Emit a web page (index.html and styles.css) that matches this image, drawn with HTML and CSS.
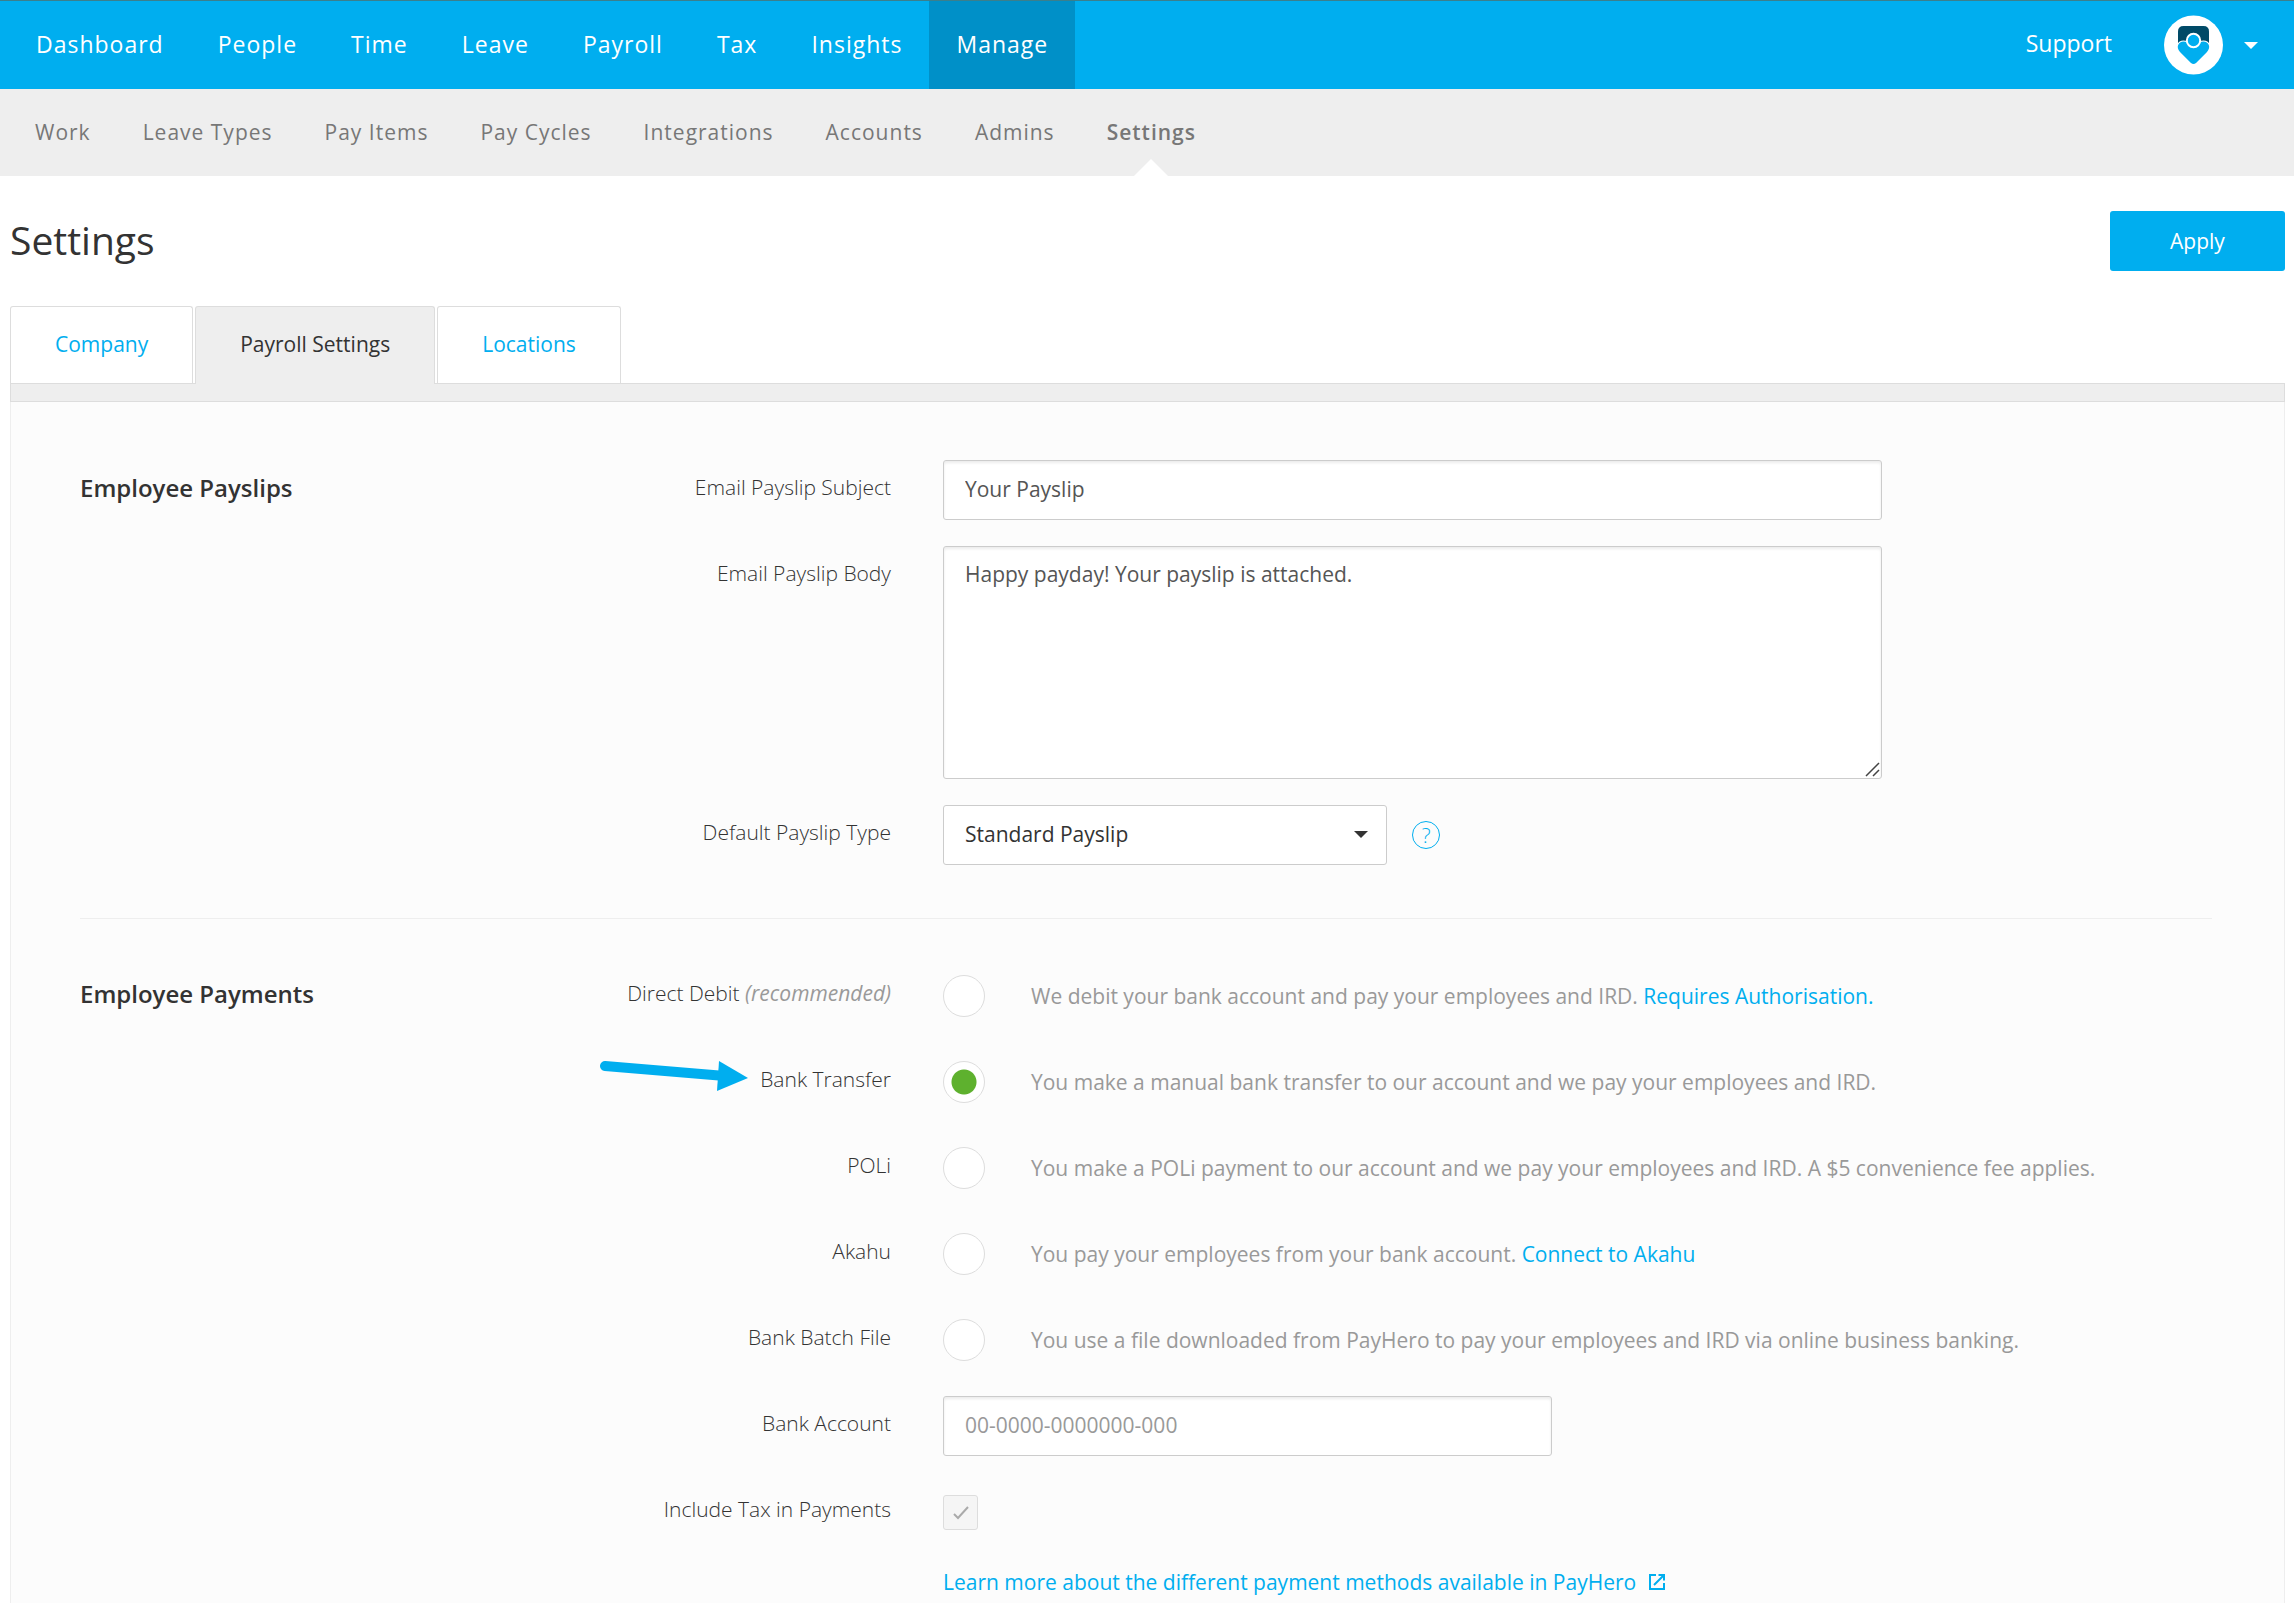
FILE: index.html
```html
<!DOCTYPE html>
<html lang="en">
<head>
<meta charset="utf-8">
<title>Settings</title>
<link rel="stylesheet" href="styles.css">
</head>
<body>
<header class="topbar">
  <nav class="topnav" aria-label="Main">
    <a href="#">Dashboard</a>
    <a href="#">People</a>
    <a href="#">Time</a>
    <a href="#">Leave</a>
    <a href="#">Payroll</a>
    <a href="#">Tax</a>
    <a href="#">Insights</a>
    <a href="#" class="active">Manage</a>
  </nav>
  <div class="account">
    <a href="#" class="support">Support</a>
    <button type="button" class="profile" aria-label="Account menu">
      <svg class="avatar" viewBox="0 0 60 60" width="60" height="60" aria-hidden="true">
        <circle cx="29.500" cy="30" r="29.500" fill="#fff"/>
        <path d="M14 28V16.500Q14 11 19.500 11h20Q45 11 45 16.500V28z" fill="#004a67"/>
        <path d="M27 48L16 37C11.500 32 14.500 26.500 19.500 26.500c3 0 4 1 5 2.500h10c1-1.500 2-2.500 5-2.500 5 0 8 5.500 3.500 10.500L32 48q-2.500 2-5 0z" fill="#00aeef" stroke="#fff" stroke-width="2" paint-order="stroke"/>
        <circle cx="29.500" cy="25.500" r="6.700" fill="#00aeef" stroke="#fff" stroke-width="2"/>
      </svg>
      <svg class="caret" viewBox="0 0 14 7" width="14" height="7" aria-hidden="true"><path d="M0 0h14L7 7z" fill="currentColor"/></svg>
    </button>
  </div>
</header>
<nav class="subnav" aria-label="Manage">
  <a href="#">Work</a>
  <a href="#">Leave Types</a>
  <a href="#">Pay Items</a>
  <a href="#">Pay Cycles</a>
  <a href="#">Integrations</a>
  <a href="#">Accounts</a>
  <a href="#">Admins</a>
  <a href="#" class="active">Settings</a>
</nav>
<main class="page">
  <div class="page-head">
    <h1>Settings</h1>
    <button type="button" class="apply">Apply</button>
  </div>
  <nav class="tabs" aria-label="Settings sections">
    <a href="#">Company</a>
    <a href="#" class="active">Payroll Settings</a>
    <a href="#">Locations</a>
  </nav>
  <div class="tab-bar"></div>
  <form class="panel">
    <section class="section">
      <h2>Employee Payslips</h2>
      <div class="rows">
        <div class="row">
          <label class="label" for="subject">Email Payslip Subject</label>
          <div class="control"><input class="field wide" id="subject" type="text" value="Your Payslip"></div>
        </div>
        <div class="row">
          <label class="label" for="body">Email Payslip Body</label>
          <div class="control">
            <div class="textarea-wrap wide">
              <textarea class="field" id="body">Happy payday! Your payslip is attached.</textarea>
              <svg class="grip" viewBox="0 0 15 15" width="15" height="15" aria-hidden="true"><path d="M1 14L14 1M8 14l6-6" stroke="#444" stroke-width="1.500" fill="none"/></svg>
            </div>
          </div>
        </div>
        <div class="row">
          <label class="label" for="type">Default Payslip Type</label>
          <div class="control">
            <div class="select-wrap">
              <select class="field" id="type"><option>Standard Payslip</option></select>
              <svg class="caret" viewBox="0 0 14 7" width="14" height="7" aria-hidden="true"><path d="M0 0h14L7 7z" fill="currentColor"/></svg>
            </div>
            <button type="button" class="help" aria-label="Help">?</button>
          </div>
        </div>
      </div>
    </section>
    <section class="section">
      <h2>Employee Payments</h2>
      <div class="rows payments">
        <div class="row">
          <label class="label" for="debit">Direct Debit <em>(recommended)</em></label>
          <div class="control"><input type="radio" name="method" id="debit"><p>We debit your bank account and pay your employees and IRD. <a href="#">Requires Authorisation.</a></p></div>
        </div>
        <div class="row">
          <label class="label" for="transfer">Bank Transfer
            <svg class="pointer" viewBox="0 0 148 32" width="148" height="32" aria-hidden="true"><path d="M5 6L119 15.500" stroke="#00aeef" stroke-width="10" stroke-linecap="round"/><path d="M119 1l29 17-31 13z" fill="#00aeef"/></svg>
          </label>
          <div class="control"><input type="radio" name="method" id="transfer" checked><p>You make a manual bank transfer to our account and we pay your employees and IRD.</p></div>
        </div>
        <div class="row">
          <label class="label" for="poli">POLi</label>
          <div class="control"><input type="radio" name="method" id="poli"><p>You make a POLi payment to our account and we pay your employees and IRD. A $5 convenience fee applies.</p></div>
        </div>
        <div class="row">
          <label class="label" for="akahu">Akahu</label>
          <div class="control"><input type="radio" name="method" id="akahu"><p>You pay your employees from your bank account. <a href="#">Connect to Akahu</a></p></div>
        </div>
        <div class="row">
          <label class="label" for="batch">Bank Batch File</label>
          <div class="control"><input type="radio" name="method" id="batch"><p>You use a file downloaded from PayHero to pay your employees and IRD via online business banking.</p></div>
        </div>
        <div class="row">
          <label class="label" for="account">Bank Account</label>
          <div class="control"><input class="field medium" id="account" type="text" placeholder="00-0000-0000000-000"></div>
        </div>
        <div class="row">
          <label class="label" for="tax">Include Tax in Payments</label>
          <div class="control">
            <span class="check"><input type="checkbox" id="tax" checked disabled>
            <svg viewBox="0 0 16 14" width="16" height="14" aria-hidden="true"><path d="M1 8l4 4L15 1" stroke="#aaa" stroke-width="2" fill="none"/></svg></span>
          </div>
        </div>
        <a href="#" class="learn">Learn more about the different payment methods available in PayHero
          <svg viewBox="0 0 18 18" width="18" height="18" aria-hidden="true"><path d="M8 2H2v14h14v-6M10.500 2H16v5.500M16 2L6 12" stroke="currentColor" stroke-width="2" fill="none"/></svg>
        </a>
      </div>
    </section>
  </form>
</main>
</body>
</html>
```
FILE: styles.css
```css
* { box-sizing: border-box; }

body {
  margin: 0;
  min-height: 100vh;
  display: flex;
  flex-direction: column;
  font: 21px/28px "Open Sans", sans-serif;
  color: #333;
  background: #fff;
}

a { color: #00aeef; text-decoration: none; }
button, input, select, textarea { font: inherit; color: inherit; }
h1, h2, p { margin: 0; }
svg { display: block; }

.topbar {
  display: flex;
  justify-content: space-between;
  height: 89px;
  padding: 0 36px 0 9px;
  border-top: 1px solid #3b7f8c;
  background: #00aeef;
}
.topnav, .subnav { display: flex; }
.topnav a {
  display: flex;
  align-items: center;
  padding: 0 27px 2px;
  color: #fff;
  font-size: 23px;
  font-weight: 500;
  letter-spacing: 1px;
}
.topnav .active { background: #0090c8; }
.account { display: flex; align-items: center; gap: 52px; }
.support { padding-bottom: 4px; color: #fff; font-size: 23px; }
.profile {
  display: flex;
  align-items: center;
  gap: 20px;
  padding: 0;
  border: 0;
  background: none;
  color: #fff;
}

.subnav { height: 87px; padding: 0 9px; background: #eee; }
.subnav a {
  display: flex;
  align-items: center;
  position: relative;
  padding: 0 26px 2px;
  color: #777;
  letter-spacing: 1px;
}
.subnav .active { font-weight: 600; }
.subnav .active::after {
  content: "";
  position: absolute;
  left: 50%;
  bottom: 0;
  margin-left: -17px;
  border: 17px solid transparent;
  border-top-width: 0;
  border-bottom-color: #fff;
}

.page {
  flex: 1;
  display: flex;
  flex-direction: column;
  padding: 35px 9px 0 10px;
}
.page-head {
  display: flex;
  justify-content: space-between;
  margin-bottom: 35px;
}
h1 { font-size: 39px; line-height: 58px; font-weight: 400; }
.apply {
  width: 175px;
  height: 60px;
  border: 0;
  border-radius: 3px;
  background: #00aeef;
  color: #fff;
}

.tabs { display: flex; gap: 2px; }
.tabs a {
  height: 77px;
  padding: 23px 44px;
  border: 1px solid #ddd;
  border-bottom: 0;
  border-radius: 3px 3px 0 0;
}
.tabs .active {
  position: relative;
  height: 78px;
  margin-bottom: -1px;
  background: #eee;
  color: #333;
}
.tab-bar { height: 19px; border: 1px solid #ddd; background: #eee; }

.panel {
  flex: 1;
  padding: 0 72px 0 69px;
  border: 1px solid #eee;
  border-width: 0 1px;
  background: #fcfcfc;
}
.section { display: grid; grid-template-columns: 25% 1fr; padding-top: 58px; }
.section + .section { margin-top: 53px; padding-top: 47px; border-top: 1px solid #eee; }
h2 { padding-top: 14px; font-size: 24px; line-height: 28px; font-weight: 600; }
.rows { display: flex; flex-direction: column; gap: 26px; }
.row { display: flex; gap: 52px; }
.payments .row { min-height: 60px; }
.label {
  flex: none;
  position: relative;
  width: 278px;
  padding-top: 13px;
  font-weight: 300;
  text-align: right;
  white-space: nowrap;
}
.label em { color: #999; font-weight: 400; }
.control { flex: 1; display: flex; align-items: center; }

.field {
  height: 60px;
  padding: 0 21px 2px;
  border: 1px solid #ccc;
  border-radius: 3px;
  background: #fff;
  color: #555;
  box-shadow: inset 0 2px 3px rgba(0, 0, 0, .08);
}
.field::placeholder { color: #999; opacity: 1; }
.wide { width: 74%; }
.medium { width: 48%; }
.textarea-wrap { position: relative; }
.textarea-wrap .field {
  display: block;
  width: 100%;
  height: 233px;
  padding: 13px 21px;
  resize: none;
}
.grip { position: absolute; right: 2px; bottom: 2px; }
.select-wrap { position: relative; width: 35%; }
.select-wrap .field {
  width: 100%;
  appearance: none;
  box-shadow: none;
  color: #333;
}
.select-wrap .caret { position: absolute; right: 19px; top: 26px; pointer-events: none; }
.help {
  width: 28px;
  height: 28px;
  margin-left: 25px;
  padding: 0;
  border: 1px solid #00aeef;
  border-radius: 50%;
  background: none;
  color: #00aeef;
  font-size: 21px;
  font-weight: 300;
  line-height: 24px;
}

input[type="radio"] {
  appearance: none;
  flex: none;
  width: 42px;
  height: 42px;
  margin: 0 46px 0 0;
  border: 1px solid #ddd;
  border-radius: 50%;
  background: #fff;
}
input[type="radio"]:checked { background: radial-gradient(circle, #5eb12e 12px, #fff 13px); }
.control p { color: #999; }
.pointer { position: absolute; right: 143px; top: 8px; }

.check { position: relative; }
.check input {
  appearance: none;
  display: block;
  width: 35px;
  height: 35px;
  margin: 0;
  border: 1px solid #ddd;
  border-radius: 3px;
  background: #f5f5f5;
}
.check svg { position: absolute; left: 10px; top: 11px; }
.learn { display: flex; align-items: center; gap: 12px; margin-left: 330px; }
```
